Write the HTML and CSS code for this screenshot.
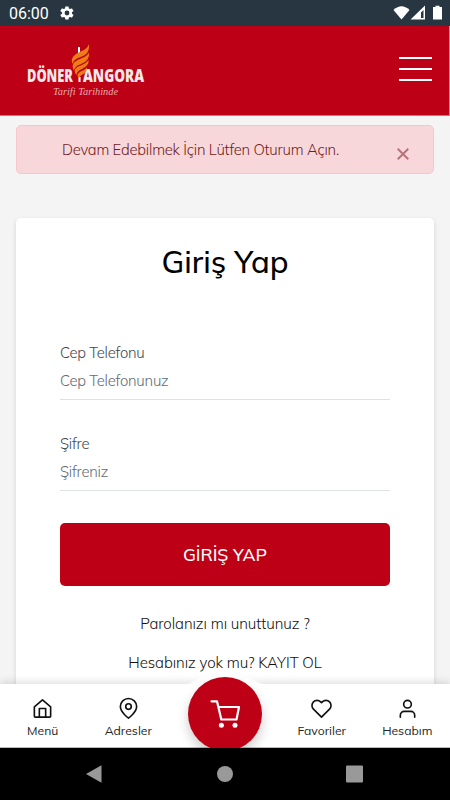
FILE: index.html
```html
<!DOCTYPE html>
<html lang="tr">
<head>
<meta charset="utf-8">
<meta name="viewport" content="width=device-width, initial-scale=1">
<title>Giriş Yap</title>
<link rel="stylesheet" href="styles.css">
</head>
<body>
<div class="status">
  <span class="clock">06:00</span>
  <svg class="gear" viewBox="0 0 24 24" width="16" height="16"><path fill="#fff" fill-rule="evenodd" d="M19.4 13a7 7 0 0 0 0-2l2.1-1.6a.5.5 0 0 0 .1-.7l-2-3.4a.5.5 0 0 0-.6-.2l-2.5 1a7.500 7.500 0 0 0-1.700-1l-.4-2.600a.5.5 0 0 0-.5-.4h-4a.5.5 0 0 0-.5.4L9 5.100a7.500 7.500 0 0 0-1.700 1l-2.500-1a.5.5 0 0 0-.6.2l-2 3.400a.5.5 0 0 0 .1.700L4.500 11a7 7 0 0 0 0 2l-2.200 1.600a.5.5 0 0 0-.1.700l2 3.400c.1.200.4.300.6.200l2.500-1a7.500 7.500 0 0 0 1.700 1l.4 2.600c0 .2.2.4.5.4h4c.3 0 .5-.2.5-.4l.4-2.600a7.500 7.500 0 0 0 1.700-1l2.500 1c.2.100.5 0 .6-.2l2-3.400a.5.5 0 0 0-.1-.700zM12 15.600a3.600 3.600 0 1 1 0-7.200 3.600 3.600 0 0 1 0 7.200z"/></svg>
  <svg class="signals" viewBox="0 0 50 16" width="50" height="16"><path fill="#fff" d="M0.500 5Q8.500-2.500 16.500 5L8.500 14.500z"/><path fill="#fff" fill-rule="evenodd" d="M32 .5v14H17.500zM30.500 5v8h-2.500V7.500z"/><path fill="#fff" d="M40 2h2.500V.8h4V2H49v12.500h-9z"/></svg>
</div>
<header class="header">
  <svg class="logo" viewBox="0 0 120 60" width="120" height="60">
    <g class="brand"><text x="0" y="42" textLength="46" lengthAdjust="spacingAndGlyphs">DÖNER</text><text x="56" y="42" textLength="61" lengthAdjust="spacingAndGlyphs">ANGORA</text></g>
    <path class="skewer" d="M52 7v6M52.500 37v5"/>
    <g class="flame"><path d="M62 4C60 10 54 11 49 14C45 17 44 20 45.500 24C47 19 51 18 56 16C61 14 62.500 9 62 4z"/><path d="M62 12.500C60 17 54 18 49 21C45 23.500 45 27 47 30.500C48 26 52 25 56 23C60.500 21 62.500 17 62 12.500z"/><path d="M61.500 20C59 24 54 25 50.500 27C47 29 47 32 49.500 35C50 31 53 30 56.500 28C60 26 62 23.500 61.500 20z"/><path d="M60 27.500C58 30 55 30.500 53 32C50 34 50 36 52 38.500C52.500 35 56 35 58 32.500C59.500 31 60 29.500 60 27.500z"/></g>
    <text class="tagline" x="26" y="54.500" textLength="65" lengthAdjust="spacingAndGlyphs">Tarifi Tarihinde</text>
  </svg>
  <div class="menu"><i></i><i></i><i></i></div>
</header>
<main class="page">
  <div class="alert"><span class="message">Devam Edebilmek İçin Lütfen Oturum Açın.</span><svg class="close" viewBox="0 0 12 12" width="12" height="12"><path d="M.7.700l10.600 10.600M11.300.700.700 11.300"/></svg></div>
  <section class="card">
    <h1>Giriş Yap</h1>
    <div class="field"><div class="label">Cep Telefonu</div><div class="value">Cep Telefonunuz</div></div>
    <div class="field"><div class="label">Şifre</div><div class="value">Şifreniz</div></div>
    <div class="submit">GİRİŞ YAP</div>
    <div class="link forgot">Parolanızı mı unuttunuz ?</div>
    <div class="link">Hesabınız yok mu? KAYIT OL</div>
  </section>
</main>
<nav class="tabs">
  <div class="tab"><svg viewBox="0 0 24 24" width="23" height="23"><path d="M3.500 10.200 12 3l8.500 7.200V20a1 1 0 0 1-1 1h-15a1 1 0 0 1-1-1zM8.700 21v-9h6.600v9"/></svg><span>Menü</span></div>
  <div class="tab"><svg viewBox="0 0 24 24" width="23" height="23"><path d="M20.500 10c0 6-8.500 12-8.500 12s-8.500-6-8.500-12a8.500 8.500 0 0 1 17 0z"/><circle cx="12" cy="10" r="2.900"/></svg><span>Adresler</span></div>
  <div class="cart"><svg viewBox="0 0 32 30" width="32" height="30"><path d="M2.500 2.300h5.500l4.300 18.200h15.200L30 8H9.500"/><circle cx="12.400" cy="26.300" r="2.500"/><circle cx="26" cy="26.300" r="2.500"/></svg></div>
  <div class="tab"><svg viewBox="0 0 24 24" width="23" height="23"><path d="M12 21 3.600 12.600a5.300 5.300 0 0 1 7.500-7.500l.9.900.9-.9a5.300 5.300 0 0 1 7.500 7.500z"/></svg><span>Favoriler</span></div>
  <div class="tab"><svg viewBox="0 0 24 24" width="23" height="23"><path d="M4.500 21v-2a4 4 0 0 1 4-4h7a4 4 0 0 1 4 4v2"/><circle cx="12" cy="7.500" r="4"/></svg><span>Hesabım</span></div>
</nav>
<div class="system"><svg viewBox="0 0 450 52" width="450" height="52"><path d="M86 26 101.500 17.200V34.800z"/><circle cx="225" cy="26" r="8"/><rect x="346" y="17.500" width="17" height="17" rx="1"/></svg></div>
</body>
</html>
```
FILE: styles.css
```css
* { box-sizing: border-box; }
body { margin: 0; width: 450px; height: 800px; overflow: hidden; display: flex; flex-direction: column; background: #f4f4f4; font-family: Mulish, Muli, Lato, sans-serif; color: #212529; }
svg { display: block; flex: none; }
.status { height: 26px; flex: none; background: #273640; display: flex; align-items: center; padding: 0 8px 0 9px; color: #fff; }
.clock { font: 16px/26px Roboto, sans-serif; width: 38px; white-space: nowrap; padding-top: 2px; }
.gear { margin-left: 12px; }
.signals { margin-left: auto; margin-right: -1px; }
.header { height: 90px; flex: none; background: #be0016; border-bottom: 1px solid #df6b75; border-right: 1px solid #e68c94; display: flex; justify-content: space-between; padding: 0 17px 0 27px; }
.logo { margin-top: 14px; overflow: visible; }
.brand { font: 800 17px "Open Sans", sans-serif; fill: #f3e9e9; }
.tagline { font: italic 10.500px Z003, "URW Chancery L", "Liberation Serif", serif; fill: #eda9af; }
.skewer { stroke: #fff; stroke-width: 2; }
.flame { fill: #ef7d16; }
.menu { margin-top: 31px; width: 33px; display: flex; flex-direction: column; gap: 9px; }
.menu i { height: 2px; background: #fff; }
.page { height: 568px; flex: none; padding: 8.500px 16px 0; overflow: hidden; }
.alert { height: 49.500px; border: 1px solid #f5c6cb; border-radius: 5px; background: #f8d7da; color: #721c24; display: flex; padding-left: 45px; }
.message { font-size: 14.800px; font-weight: 350; letter-spacing: -.22px; line-height: 48px; width: 335px; white-space: nowrap; }
.close { margin-top: 22.500px; fill: none; stroke: #b8737d; stroke-width: 2; }
.card { margin-top: 43.500px; height: 520px; background: #fff; border-radius: 5px; box-shadow: 0 2px 5px #0002; padding: 24.500px 44px 0; font-weight: 300; }
h1 { margin: 0; font-size: 31px; line-height: 40px; font-weight: 500; color: #000; text-align: center; }
.field { height: 91px; border-bottom: 1px solid #dee2e6; padding-top: 30px; font-size: 14.800px; font-weight: 350; letter-spacing: -.22px; color: #40474e; }
h1 + .field { height: 118px; padding-top: 57px; }
.label, .value { line-height: 28px; }
.value { color: #626b74; }
.submit { margin-top: 32px; height: 63px; border-radius: 5px; background: #be0016; color: #fff; font-size: 17.600px; font-weight: 500; line-height: 63px; text-align: center; }
.link { font-size: 15px; letter-spacing: -.06px; line-height: 39px; text-align: center; color: #111; }
.forgot { margin-top: 17.500px; }
.tabs { height: 64px; flex: none; background: #fff; box-shadow: 0 -2px 8px #0002; display: flex; position: relative; z-index: 0; border-bottom: 1px solid #bbb; }
.tab { width: 85.500px; flex: none; padding-top: 13px; display: flex; flex-direction: column; align-items: center; }
.tab svg, .cart svg { fill: none; stroke: #111; stroke-width: 1.700; stroke-linejoin: round; stroke-linecap: round; }
.tab span { font-size: 12.200px; line-height: 20px; margin-top: 1px; }
.cart { position: relative; width: 74px; height: 74px; margin: -7px 17px 0; flex: none; border-radius: 50%; background: #be0016; box-shadow: 0 6px 12px #0003; display: flex; align-items: center; justify-content: center; }
.cart::before { content: ""; position: absolute; z-index: -1; top: -3px; left: -15px; width: 104px; height: 70px; border-radius: 50%; background: #fff; filter: blur(1px); }
.cart svg { stroke: #fff; stroke-width: 2.200; }
.cart circle { fill: #fff; stroke: none; }
.system { height: 52px; background: #000; flex: none; position: relative; z-index: 1; }
.system svg { fill: #999; }
```
